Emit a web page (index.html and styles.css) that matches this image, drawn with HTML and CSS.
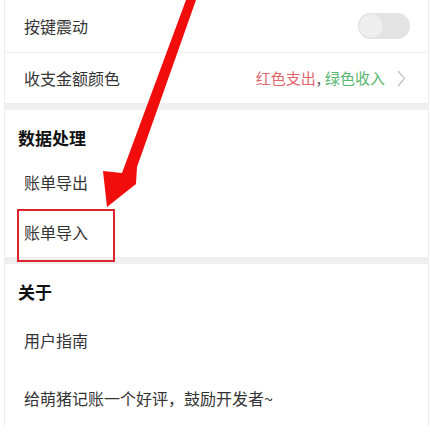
FILE: index.html
```html
<!DOCTYPE html>
<html lang="zh-CN">
<head>
<meta charset="utf-8">
<title>设置</title>
<link rel="stylesheet" href="styles.css">
</head>
<body>
<div class="page">
  <section class="group">
    <div class="row row-first">
      <span class="label">按键震动</span>
      <span class="toggle"><span class="knob"></span></span>
    </div>
    <div class="row row-second">
      <span class="label">收支金额颜色</span>
      <span class="value"><span class="red">红色支出</span><span class="comma">,</span><span class="green">绿色收入</span>
        <svg class="chev" width="9" height="17" viewBox="0 0 9 17"><path d="M1 1 L7.5 8.5 L1 16" fill="none" stroke="#c4c4c4" stroke-width="1.3"/></svg>
      </span>
    </div>
  </section>
  <div class="gap"></div>
  <section class="group">
    <div class="head">数据处理</div>
    <div class="row row-mid"><span class="label">账单导出</span></div>
    <div class="row row-mid"><span class="label">账单导入</span></div>
  </section>
  <div class="gap"></div>
  <section class="group">
    <div class="head">关于</div>
    <div class="row row-tall"><span class="label">用户指南</span></div>
    <div class="row row-tall"><span class="label">给萌猪记账一个好评，鼓励开发者~</span></div>
  </section>

  <div class="highlight"></div>
  <svg class="arrow" width="430" height="432" viewBox="0 0 430 432">
    <polygon points="186,0 196,0 137,167 136,184 107,207 103,171 122,173" fill="#f20d0d"/>
  </svg>
</div>
</body>
</html>
```

FILE: styles.css
```css
html, body {
  margin: 0;
  padding: 0;
  background: #ffffff;
}
body {
  font-family: "Noto Sans CJK SC", "Noto Sans", sans-serif;
  color: #333333;
  overflow: hidden;
}
.page {
  position: relative;
  width: 430px;
  height: 432px;
  overflow: hidden;
}
.group {
  margin: 0 1px 0 4px;
  border-left: 1px solid #ececec;
  border-right: 1px solid #ececec;
  background: #ffffff;
  display: flex;
  flex-direction: column;
}
.gap {
  margin: 0 1px 0 4px;
  height: 7px;
  background: #efefef;
}
.row {
  display: flex;
  align-items: center;
  justify-content: space-between;
  padding: 0 18px 0 19px;
  box-sizing: border-box;
}
.row-first {
  height: 53px;
  border-bottom: 1px solid #f1f1f1;
}
.row-second {
  height: 50px;
}
.row-mid {
  height: 50px;
}
.row-tall {
  height: 58px;
}
.label {
  font-size: 16px;
  line-height: 22px;
  color: #333333;
}
.head {
  height: 47px;
  box-sizing: border-box;
  padding: 17px 0 0 13px;
  font-size: 17px;
  line-height: 22px;
  font-weight: 700;
  color: #111111;
}
.toggle {
  width: 52px;
  height: 26px;
  border-radius: 13px;
  background: #e3e3e3;
  display: flex;
  align-items: center;
}
.knob {
  width: 26px;
  height: 26px;
  border-radius: 50%;
  background: #eeeeee;
  box-sizing: border-box;
  border: 1px solid #e0e0e0;
}
.value {
  display: flex;
  align-items: center;
  font-size: 15px;
  line-height: 20px;
}
.red { color: #e0646c; }
.green { color: #5ab672; }
.comma { color: #555555; margin: 0 4px 0 1px; }
.chev {
  margin-left: 12px;
  margin-right: 4px;
  display: block;
}
.highlight {
  position: absolute;
  left: 17px;
  top: 209px;
  width: 98px;
  height: 53px;
  box-sizing: border-box;
  border: 2px solid #d9252b;
}
.arrow {
  position: absolute;
  left: 0;
  top: 0;
}
```
